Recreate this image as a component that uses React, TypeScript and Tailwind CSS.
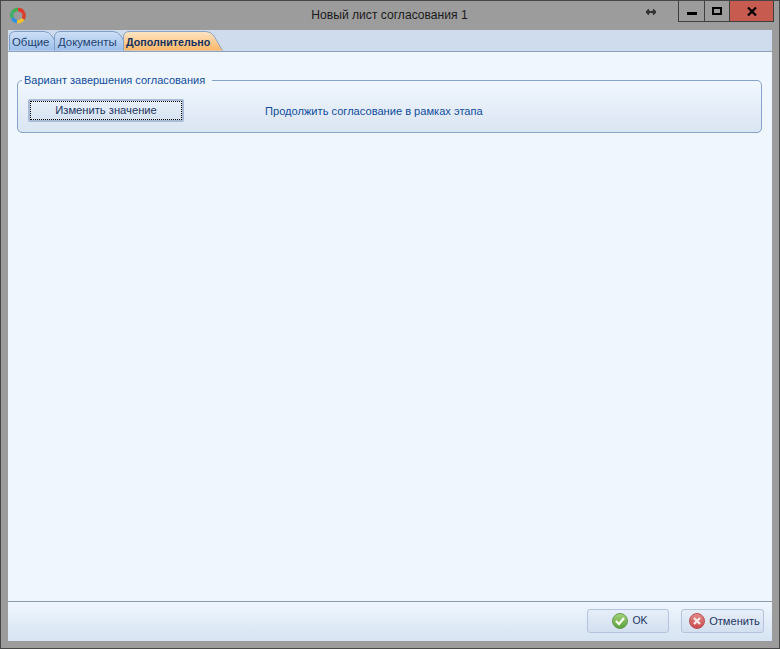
import React from "react";

const font = { fontFamily: '"Liberation Sans", Arial, sans-serif' };

function Tab({ label, width, active, size, left }: { label: string; width: number; active?: boolean; size: string; left: string }) {
  const w = width;
  const d = `M0.5 19.5 V6 Q0.5 1 6 0.5 H${w - 17} Q${w - 12} 0.5 ${w - 9} 5 L${w - 0.5} 19.5`;
  return (
    <div className="relative h-[20px] -mr-[7px]" style={{ width: w }}>
      <svg className="absolute inset-0" width={w} height={20}>
        <defs>
          <linearGradient id={`g${label}`} x1="0" y1="0" x2="0" y2="1">
            <stop offset="0" stopColor={active ? "#fde6c6" : "#cfe0f6"} />
            <stop offset="1" stopColor={active ? "#fdb766" : "#9dbfea"} />
          </linearGradient>
        </defs>
        <path d={d + " Z"} fill={`url(#g${label})`} stroke="none" />
        <path d={d} fill="none" stroke={active ? "#8ba3c4" : "#7f9dc6"} />
      </svg>
      <span
        className={`absolute top-[4px] leading-[14px] whitespace-nowrap ${left} ${size} ${active ? "font-bold text-[#13305f]" : "text-[#1d3f70]"}`}
      >
        {label}
      </span>
    </div>
  );
}

function Btn({ label, w, size, icon }: { label: string; w: number; size: string; icon: React.ReactNode }) {
  return (
    <button
      className={`h-[24px] rounded-[3px] border border-[#b3c4dc] bg-gradient-to-b from-[#e6eef8] to-[#d3e0f0] flex items-center justify-center gap-[4px] pl-[4px] ${size} text-[#1d3560]`}
      style={{ width: w }}
    >
      {icon}
      <span>{label}</span>
    </button>
  );
}

export default function App() {
  return (
    <div
      className="w-[780px] h-[649px] box-border border border-[#474747] bg-[#9c9c9c] flex flex-col overflow-hidden"
      style={font}
    >
      <div className="h-[29px] flex shrink-0 relative">
        <div className="w-[28px] flex items-start pt-[6px] pl-[9px]">
          <svg width="16" height="17" viewBox="0 0 16 17" fill="none">
            <path d="M3 4.5 A6 6 0 0 1 8 2.5" stroke="#3fae4f" strokeWidth="3.4" />
            <path d="M8 2.5 A6 6 0 0 1 13.5 6" stroke="#e2392d" strokeWidth="3.4" />
            <path d="M13.5 6 A6 6 0 0 1 13 12" stroke="#d8402c" strokeWidth="3.4" />
            <path d="M13 12 A6 6 0 0 1 7 14.5" stroke="#f2c230" strokeWidth="3.4" />
            <path d="M7 14.5 A6 6 0 0 1 2.5 11" stroke="#2f8fe0" strokeWidth="3.4" />
            <path d="M2.5 11 A6 6 0 0 1 3 4.5" stroke="#3fae6a" strokeWidth="3.4" />
          </svg>
        </div>
        <div className="flex-1 text-center text-[12.1px] leading-[14px] pt-[7px] pl-[106px] text-[#1a1a1a]">
          Новый лист согласования 1
        </div>
        <div className="w-[28px] flex justify-start pl-[2px] pt-[4px] text-[#333]">
          <svg width="10" height="14" viewBox="0 0 10 14">
            <path d="M0.5 7 H9.5 M3 4.5 L0.5 7 L3 9.5 M7 4.5 L9.5 7 L7 9.5" stroke="#333" strokeWidth="1.8" fill="none" />
          </svg>
        </div>
        <div className="flex h-[21px] mr-[5px] border border-t-0 border-[#3f3f3f] ml-[6px]">
          <div className="w-[26px] flex items-center justify-center border-r border-[#3f3f3f]">
            <div className="w-[10px] h-[3px] bg-black mt-[4px]" />
          </div>
          <div className="w-[25px] flex items-center justify-center border-r border-[#3f3f3f]">
            <div className="w-[10px] h-[8px] border-2 border-black -mt-[1px]" />
          </div>
          <div className="w-[43px] bg-[#c75b50] flex items-center justify-center">
            <svg width="10" height="9" viewBox="0 0 10 9">
              <path d="M1 0.5 L9 8.5 M9 0.5 L1 8.5" stroke="#000" strokeWidth="2.2" />
            </svg>
          </div>
        </div>
      </div>

      <div className="mx-[7px] h-[611px] flex flex-col bg-[#eff6fe]">
        <div className="h-[22px] shrink-0 bg-[#cfdcee] border-b border-[#8ea2bf] flex items-end pl-[1px]">
          <Tab label="Общие" width={52} size="text-[11.4px]" left="left-[3px]" />
          <Tab label="Документы" width={76} size="text-[11.4px]" left="left-[4px]" />
          <Tab label="Дополнительно" width={100} size="text-[10.7px]" left="left-[3px]" active />
        </div>

        <div className="flex-1 pl-[9px] pr-[10px] pt-[27px]">
          <fieldset className="h-[60px] border border-[#86a3cb] rounded-[5px] bg-gradient-to-b from-[#f1f7fe] to-[#dae5f3] m-0 pl-[10px] pr-[11px] pt-0 pb-0 min-w-0 relative -mt-[6px] flex">
            <legend className="text-[11px] leading-[14px] text-[#0f4c9c] pl-[2px] pr-[7px] ml-[-6px]">
              Вариант завершения согласования
            </legend>
            <div className="flex items-center w-full pb-[2px] pt-[4px]">
              <button className="w-[156px] h-[23px] shrink-0 rounded-[2px] border-2 border-[#a9bbd6] bg-gradient-to-b from-[#e8f0f9] to-[#d5e2f1] text-[11.2px] text-[#1d3560] outline-1 outline-dotted outline-black -outline-offset-3">
                Изменить значение
              </button>
              <span className="ml-[81px] mt-[2px] text-[11.1px] text-[#0f4c9c]">Продолжить согласование в рамках этапа</span>
            </div>
          </fieldset>
        </div>

        <div className="h-[40px] shrink-0 border-t border-[#8a9ab0] bg-gradient-to-b from-[#eff6fe] to-[#d6e3f2] flex items-start justify-end pt-[7px] pr-[8px] gap-[12px]">
          <Btn
            label="OK"
            w={82}
            size="text-[10.5px]"
            icon={
              <svg width="16" height="16" viewBox="0 0 16 16">
                <defs>
                  <linearGradient id="okg" x1="0" y1="0" x2="0" y2="1">
                    <stop offset="0" stopColor="#a5d37c" />
                    <stop offset="1" stopColor="#58a038" />
                  </linearGradient>
                </defs>
                <circle cx="8" cy="8" r="7.5" fill="url(#okg)" stroke="#6a9c50" />
                <path d="M4 8 L7 11 L12 5" stroke="#f4f8ee" strokeWidth="2.4" fill="none" />
              </svg>
            }
          />
          <Btn
            label="Отменить"
            w={83}
            size="text-[11.1px]"
            icon={
              <svg width="16" height="16" viewBox="0 0 16 16">
                <defs>
                  <linearGradient id="cg" x1="0" y1="0" x2="0" y2="1">
                    <stop offset="0" stopColor="#e58c88" />
                    <stop offset="1" stopColor="#c9484e" />
                  </linearGradient>
                </defs>
                <circle cx="8" cy="8" r="7.5" fill="url(#cg)" stroke="#b8555a" />
                <path d="M5 5 L11 11 M11 5 L5 11" stroke="#f7e9e6" strokeWidth="2.4" />
              </svg>
            }
          />
        </div>
      </div>
    </div>
  );
}
